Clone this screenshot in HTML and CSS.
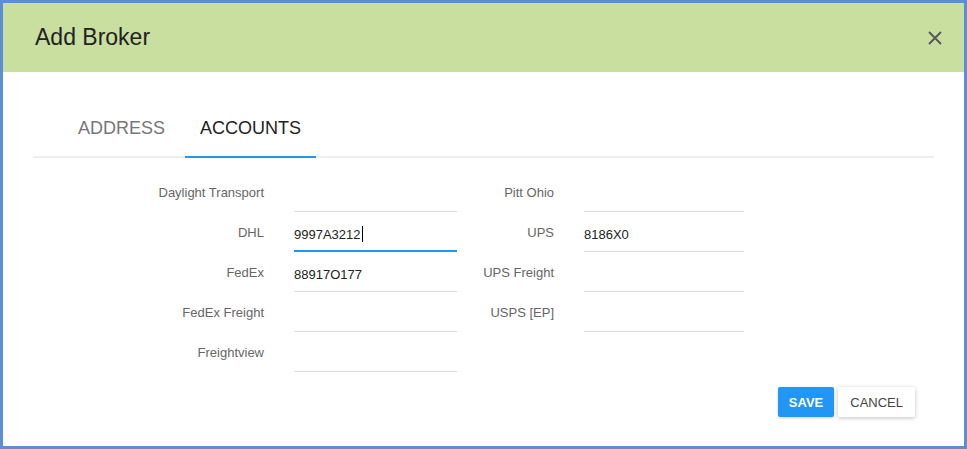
FILE: index.html
```html
<!DOCTYPE html>
<html>
<head>
<meta charset="utf-8">
<link rel="stylesheet" href="styles.css">
</head>
<body>
<div class="dialog">
  <div class="header">
    <div class="title">Add Broker</div>
    <svg class="close" width="14" height="14" viewBox="0 0 14 14"><path d="M1 1L13 13M13 1L1 13" stroke="#555" stroke-width="1.8" fill="none"/></svg>
  </div>
  <div class="content">
    <div class="tabs">
      <div class="tab">ADDRESS</div>
      <div class="tab active">ACCOUNTS</div>
    </div>
    <div class="form">
      <div class="col col-left">
        <div class="label">Daylight Transport</div><div class="field"></div>
        <div class="label">DHL</div><div class="field focused">9997A3212<span class="caret"></span></div>
        <div class="label">FedEx</div><div class="field">88917O177</div>
        <div class="label">FedEx Freight</div><div class="field"></div>
        <div class="label">Freightview</div><div class="field"></div>
      </div>
      <div class="col col-right">
        <div class="label">Pitt Ohio</div><div class="field"></div>
        <div class="label">UPS</div><div class="field">8186X0</div>
        <div class="label">UPS Freight</div><div class="field"></div>
        <div class="label">USPS [EP]</div><div class="field"></div>
      </div>
    </div>
    <div class="actions">
      <button class="btn btn-save">SAVE</button>
      <button class="btn btn-cancel">CANCEL</button>
    </div>
  </div>
</div>
</body>
</html>
```
FILE: styles.css
```css
* { box-sizing: border-box; }
html, body { margin: 0; padding: 0; background: #fff; }
body { font-family: "Liberation Sans", Arial, sans-serif; }
.dialog {
  width: 967px;
  height: 449px;
  border: 3px solid #5a8fd6;
  background: #fff;
}
.header {
  height: 69px;
  background: #c8dfa0;
  display: flex;
  align-items: center;
  justify-content: space-between;
  padding: 0 22px 0 32px;
}
.title { font-size: 23px; color: #222; }
.close { display: block; }
.content { padding: 29px 30px 0 30px; }
.tabs {
  display: flex;
  gap: 5px;
  padding-left: 30px;
  border-bottom: 2px solid #eee;
}
.tab {
  height: 57px;
  padding: 0 15px;
  display: flex;
  align-items: center;
  font-size: 18px;
  color: #777;
  margin-bottom: -2px;
  border-bottom: 2px solid transparent;
}
.tab.active { color: #222; border-bottom-color: #2196f3; }
.form {
  display: flex;
  padding-top: 22px;
}
.col {
  display: grid;
  column-gap: 30px;
  row-gap: 8px;
  align-content: start;
}
.col-left { grid-template-columns: 231px 163px; }
.col-right { grid-template-columns: 97px 160px; }
.label {
  font-size: 13px;
  line-height: 15px;
  color: #666;
  text-align: right;
  padding-top: 5px;
  white-space: nowrap;
}
.field {
  height: 32px;
  border-bottom: 1px solid #ddd;
  font-size: 13px;
  color: #222;
  display: flex;
  align-items: center;
  padding-bottom: 3px;
  position: relative;
}
.field.focused { border-bottom: 2px solid #2196f3; padding-bottom: 2px; }
.caret {
  display: inline-block;
  width: 1px;
  height: 16px;
  background: #000;
  margin-left: 1px;
}
.actions {
  display: flex;
  justify-content: flex-end;
  gap: 4px;
  padding-right: 19px;
  margin-top: 15px;
}
.btn {
  font-family: "Liberation Sans", Arial, sans-serif;
  font-size: 13px;
  height: 30px;
  padding: 0 12px;
  border: none;
  border-radius: 2px;
}
.btn-save { background: #2196f3; color: #fff; font-weight: bold; box-shadow: 0 1px 3px rgba(0,0,0,0.2); padding: 0 11px; }
.btn-cancel { background: #fff; color: #444; box-shadow: 0 1px 4px rgba(0,0,0,0.25); }
```
